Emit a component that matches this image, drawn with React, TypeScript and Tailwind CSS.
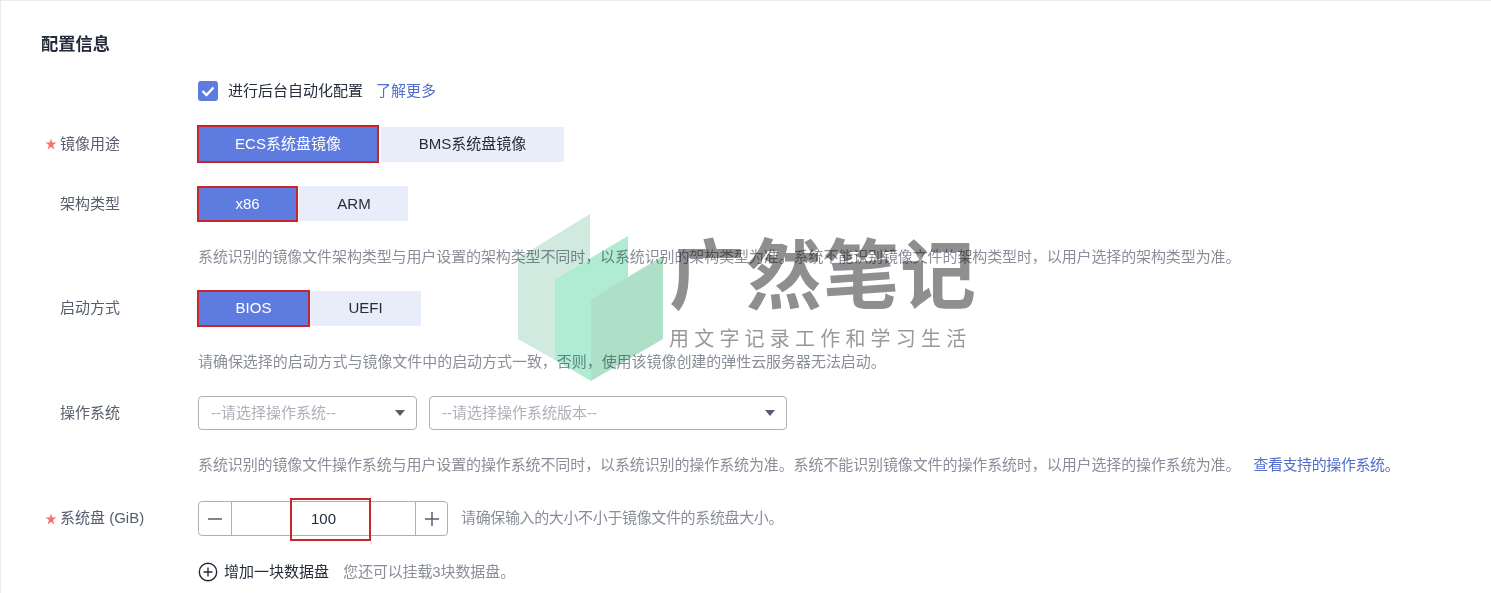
import { ReactNode } from "react"

const Field = ({ label, required, children, className }: { label?: string, required?: boolean, children: ReactNode, className: string }) => {
    return (
        <div className={`flex items-center ${className}`}>
            <div className="w-[157px] shrink-0 flex items-center text-[#575d6c]">
                <span className="w-[19px] pl-1 flex items-center">
                    {required && (
                        <svg width="12" height="12" viewBox="0 0 12 12"><path d="M6 0.5L7.2 4.6H11.6L8 7.1L9.4 11.4L6 8.7L2.6 11.4L4 7.1L0.4 4.6H4.8Z" fill="#f66f6a" /></svg>
                    )}
                </span>
                <span>{label}</span>
            </div>
            {children}
        </div>
    )
}

const Hint = ({ children, className }: { children: ReactNode, className: string }) => {
    return <div className={`pl-[157px] h-5 leading-5 text-[#8a8e99] ${className}`}>{children}</div>
}

const Toggle = ({ active, width, height, text, className = "" }: { active?: boolean, width: string, height: string, text: string, className?: string }) => {
    return (
        <div className={`flex items-center justify-center ${width} ${height} ${active ? "bg-[#5e7ce0] text-white border-2 border-[#c9252d]" : "bg-[#e9edfa] text-[#252b3a]"} ${className}`}>
            {text}
        </div>
    )
}

const Select = ({ text, width }: { text: string, width: string }) => {
    return (
        <div className={`h-[34px] ${width} flex items-center justify-between pl-3 pr-[11px] border border-[#adb0b8] rounded-sm text-[#adb0b8]`}>
            <span>{text}</span>
            <svg width="10" height="6" viewBox="0 0 10 6"><path d="M0 0H10L5 6Z" fill="#575d6c" /></svg>
        </div>
    )
}

const App = () => {
    return (
        <div className="relative w-[1491px] h-[593px] overflow-hidden bg-white border-l border-t border-[#ececec] pl-10 pt-[31px] text-[15px] font-['Liberation_Sans','Noto_Sans_CJK_SC',sans-serif]">
            <div className="h-6 leading-6 text-[17.3px] font-bold text-[#252b3a]">配置信息</div>

            <div className="flex items-center h-[22px] mt-[24px] pl-[157px]">
                <div className="w-5 h-5 rounded-[3px] bg-[#5e7ce0] flex items-center justify-center">
                    <svg width="14" height="11" viewBox="0 0 14 11" fill="none"><path d="M1.5 5L5.5 9L12.5 1.5" stroke="white" strokeWidth="2.4" /></svg>
                </div>
                <span className="ml-[10px] text-[#252b3a]">进行后台自动化配置</span>
                <span className="ml-[13px] text-[#526ecc]">了解更多</span>
            </div>

            <Field label="镜像用途" required className="mt-[23px] h-[38px]">
                <Toggle active width="w-[182px]" height="h-[38px]" text="ECS系统盘镜像" className="-ml-px" />
                <Toggle width="w-[183px]" height="h-[35px]" text="BMS系统盘镜像" className="ml-[2px]" />
            </Field>

            <Field label="架构类型" className="mt-[23px] h-[36px]">
                <Toggle active width="w-[101px]" height="h-[36px]" text="x86" className="-ml-px" />
                <Toggle width="w-[109px]" height="h-[35px]" text="ARM" className="ml-[1px] self-start pt-px pl-px" />
            </Field>
            <Hint className="mt-[25px] tracking-[-0.11px]">系统识别的镜像文件架构类型与用户设置的架构类型不同时，以系统识别的架构类型为准。系统不能识别镜像文件的架构类型时，以用户选择的架构类型为准。</Hint>

            <Field label="启动方式" className="mt-[23px] h-[37px]">
                <Toggle active width="w-[113px]" height="h-[37px]" text="BIOS" className="-ml-px" />
                <Toggle width="w-[111px]" height="h-[35px]" text="UEFI" />
            </Field>
            <Hint className="mt-[25px] tracking-[-0.05px]">请确保选择的启动方式与镜像文件中的启动方式一致，否则，使用该镜像创建的弹性云服务器无法启动。</Hint>

            <Field label="操作系统" className="mt-[24px] h-[34px]">
                <Select text="--请选择操作系统--" width="w-[219px]" />
                <div className="w-3" />
                <Select text="--请选择操作系统版本--" width="w-[358px]" />
            </Field>
            <Hint className="mt-[25px] tracking-[-0.11px]">
                系统识别的镜像文件操作系统与用户设置的操作系统不同时，以系统识别的操作系统为准。系统不能识别镜像文件的操作系统时，以用户选择的操作系统为准。
                <span className="ml-[13px] tracking-[-0.4px] text-[#526ecc]">查看支持的操作系统。</span>
            </Hint>

            <Field label="系统盘 (GiB)" required className="mt-[26px] h-[35px]">
                <div className="w-[250px] h-[35px] flex border border-[#adb0b8] rounded-sm">
                    <div className="w-[33px] flex items-center justify-center border-r border-[#adb0b8]">
                        <svg width="16" height="16" viewBox="0 0 16 16"><path d="M1 8H15" stroke="#575d6c" strokeWidth="1.5" /></svg>
                    </div>
                    <div className="relative flex-1 flex items-center justify-center pt-px text-[#252b3a]">
                        100
                        <div className="absolute left-[58px] -top-1 w-[81px] h-[43px] border-2 border-[#c9252d]" />
                    </div>
                    <div className="w-[32px] flex items-center justify-center border-l border-[#adb0b8]">
                        <svg width="16" height="16" viewBox="0 0 16 16"><path d="M1 8H15M8 1V15" stroke="#575d6c" strokeWidth="1.5" /></svg>
                    </div>
                </div>
                <span className="ml-[13px] tracking-[-0.36px] text-[#8a8e99]">请确保输入的大小不小于镜像文件的系统盘大小。</span>
            </Field>

            <div className="flex items-center h-[22px] mt-[25px] pl-[157px]">
                <svg width="20" height="20" viewBox="0 0 20 20" fill="none">
                    <circle cx="10" cy="10" r="8.7" stroke="#252b3a" strokeWidth="1.4" />
                    <path d="M5.5 10H14.5M10 5.5V14.5" stroke="#252b3a" strokeWidth="1.4" />
                </svg>
                <span className="ml-[6px] text-[#252b3a]">增加一块数据盘</span>
                <span className="ml-[14px] tracking-[-0.11px] text-[#8a8e99]">您还可以挂载3块数据盘。</span>
            </div>

            {/* watermark */}
            <svg className="absolute left-[515px] top-[211px] mix-blend-multiply" width="150" height="170" viewBox="515 211 150 170">
                <path d="M517 257L589 213V257L554 278V359L517 338Z" fill="#d0eadf" />
                <path d="M554 278L627 235V277L590 298V380L554 359Z" fill="#b0ebd3" />
                <path d="M590 298L662 255V338L590 380Z" fill="#aee0c8" />
            </svg>
            <div className="absolute left-[668px] top-[230px] text-[76px] leading-[92px] font-bold tracking-[1px] whitespace-nowrap text-[#8f8f8f] mix-blend-multiply">广然笔记</div>
            <div className="absolute left-[668px] top-[325px] text-[20px] leading-[26px] tracking-[5.2px] whitespace-nowrap text-[#999999] mix-blend-multiply">用文字记录工作和学习生活</div>
        </div>
    )
}
export default App
